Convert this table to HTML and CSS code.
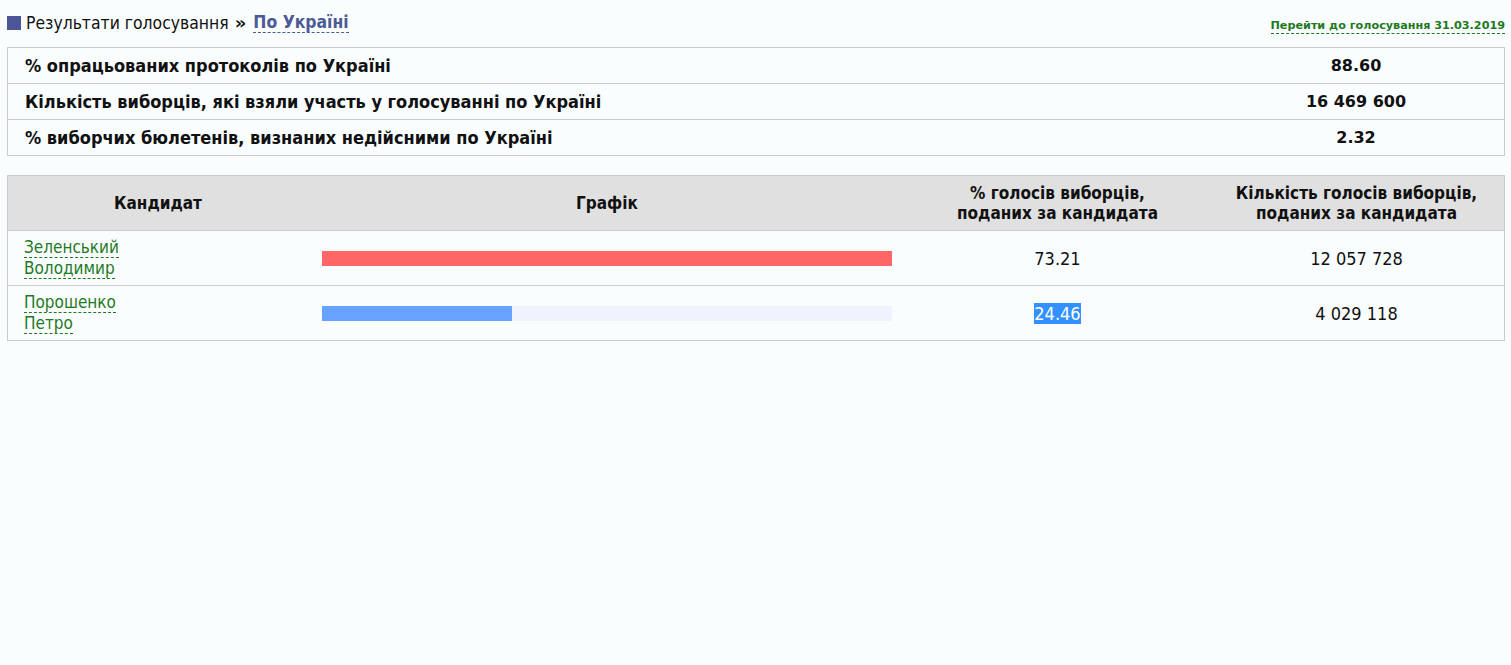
FILE: index.html
```html
<!DOCTYPE html>
<html lang="uk">
<head>
<meta charset="utf-8">
<title>Результати голосування</title>
<link rel="stylesheet" href="styles.css">
</head>
<body>
<div class="page">
  <div class="topbar">
    <div class="crumbs">
      <span class="square"></span>
      <span class="crumb-text">Результати голосування</span>
      <span class="raquo">»</span>
      <a class="crumb-link" href="#">По Україні</a>
    </div>
    <a class="goto" href="#">Перейти до голосування 31.03.2019</a>
  </div>

  <table class="summary">
    <tr><td class="label">% опрацьованих протоколів по Україні</td><td class="val">88.60</td></tr>
    <tr><td class="label">Кількість виборців, які взяли участь у голосуванні по Україні</td><td class="val">16 469 600</td></tr>
    <tr><td class="label">% виборчих бюлетенів, визнаних недійсними по Україні</td><td class="val">2.32</td></tr>
  </table>

  <table class="results">
    <tr class="head">
      <th class="c-name">Кандидат</th>
      <th class="c-graph">Графік</th>
      <th class="c-pct">% голосів виборців,<br>поданих за кандидата</th>
      <th class="c-cnt">Кількість голосів виборців,<br>поданих за кандидата</th>
    </tr>
    <tr>
      <td class="c-name"><a class="cand" href="#">Зеленський</a><br><a class="cand" href="#">Володимир</a></td>
      <td class="c-graph"><div class="bar"><div class="fill red" style="width:100%"></div></div></td>
      <td class="c-pct num">73.21</td>
      <td class="c-cnt num">12 057 728</td>
    </tr>
    <tr>
      <td class="c-name"><a class="cand" href="#">Порошенко</a><br><a class="cand" href="#">Петро</a></td>
      <td class="c-graph"><div class="bar"><div class="fill blue" style="width:33.4%"></div></div></td>
      <td class="c-pct num"><span class="sel">24.46</span></td>
      <td class="c-cnt num">4 029 118</td>
    </tr>
  </table>
</div>
</body>
</html>
```

FILE: styles.css
```css
html, body {
  margin: 0;
  padding: 0;
  background: #f9fdfe;
}
body {
  font-family: "DejaVu Sans Condensed", "DejaVu Sans", sans-serif;
  color: #111;
  font-size: 16px;
}
.page {
  padding: 0 6px 0 7px;
}
.topbar {
  display: flex;
  justify-content: space-between;
  align-items: flex-end;
  height: 34px;
}
.crumbs {
  display: flex;
  align-items: center;
  padding-bottom: 1px;
}
.square {
  width: 14px;
  height: 14px;
  background: #4b5597;
  margin-right: 5px;
}
.crumb-text {
  font-size: 17.4px;
  color: #111;
}
.raquo {
  font-family: "DejaVu Sans", sans-serif;
  font-weight: bold;
  font-size: 18px;
  margin: 0 7px 0 6px;
  color: #111;
}
.crumb-link {
  font-weight: bold;
  font-size: 17.4px;
  color: #4c5a95;
  text-decoration: none;
  border-bottom: 1px dashed #4c5a95;
  line-height: 19px;
}
.goto {
  font-family: "DejaVu Sans", sans-serif;
  font-weight: bold;
  font-size: 11.2px;
  color: #1f7a1f;
  text-decoration: none;
  border-bottom: 1px dashed #1f7a1f;
  margin-bottom: 0;
  line-height: 14px;
}
table {
  border-collapse: collapse;
  width: 100%;
}
.summary {
  margin-top: 13px;
  border: 1px solid #ccc;
}
.summary td {
  border-bottom: 1px solid #ccc;
  height: 35px;
  padding: 0;
}
.summary .label {
  font-weight: bold;
  padding-left: 17px;
  font-size: 18px;
}
.summary .val {
  font-family: "DejaVu Sans", sans-serif;
  font-weight: bold;
  font-size: 16px;
  text-align: center;
  width: 296px;
}
.results {
  margin-top: 19px;
  border: 1px solid #ccc;
  table-layout: fixed;
}
.results th {
  background: #e0e0e0;
  height: 54px;
  padding: 0;
  font-weight: bold;
  font-size: 17px;
  line-height: 20px;
  text-align: center;
  border-bottom: 1px solid #ccc;
}
.results td {
  height: 54px;
  padding: 0;
  border-bottom: 1px solid #ccc;
}
.c-name { width: 300px; }
.c-graph { width: 598px; }
.c-pct { width: 303px; }
.results td.c-name {
  padding-left: 16px;
  line-height: 20px;
}
.results td.c-graph {
  padding: 0 14px;
}
.cand {
  font-size: 17px;
  color: #1f7a1f;
  text-decoration: none;
  border-bottom: 1px dashed #1f7a1f;
}
.bar {
  height: 15px;
  background: #eef3fe;
}
.fill {
  height: 100%;
}
.red { background: #ff6666; }
.blue { background: #66a3ff; }
.num {
  text-align: center;
  font-size: 18px;
}
.sel {
  background: #3390ff;
  color: #fff;
}
```
